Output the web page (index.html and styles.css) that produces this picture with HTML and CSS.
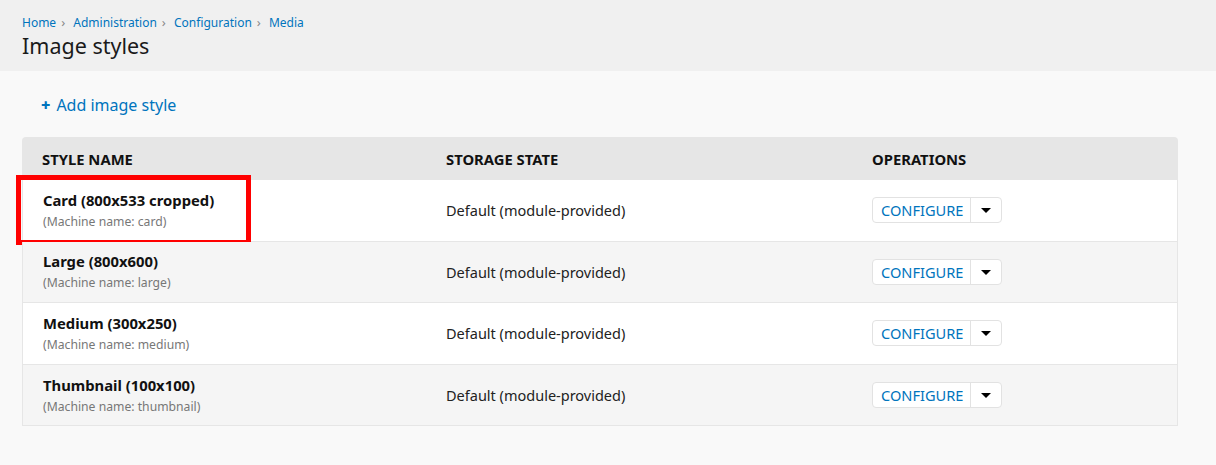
FILE: index.html
```html
<!DOCTYPE html>
<html>
<head>
	<title>Image styles</title>
	<link rel="stylesheet" href="styles.css">
</head>
<body>
	<div class="page-header">
		<nav class="breadcrumb">
			<a href="#">Home</a><span class="sep">&rsaquo;</span>
			<a href="#">Administration</a><span class="sep">&rsaquo;</span>
			<a href="#">Configuration</a><span class="sep">&rsaquo;</span>
			<a href="#">Media</a>
		</nav>
		<h1 class="page-title">Image styles</h1>
	</div>

	<div class="content">
		<a href="#" class="action-link"><span class="plus">+</span>Add image style</a>

		<table class="styles-table">
			<thead>
				<tr>
					<th class="col-name">Style name</th>
					<th class="col-state">Storage state</th>
					<th class="col-ops">Operations</th>
				</tr>
			</thead>
			<tbody>
				<tr>
					<td class="name-cell">
						<span class="highlight"></span>
						<div class="style-label">Card (800x533 cropped)</div>
						<div class="machine-name">(Machine name: card)</div>
					</td>
					<td>Default (module-provided)</td>
					<td>
						<div class="dropbutton"><a href="#" class="drop-main">Configure</a><span class="drop-toggle"></span></div>
					</td>
				</tr>
				<tr>
					<td class="name-cell">
						<div class="style-label">Large (800x600)</div>
						<div class="machine-name">(Machine name: large)</div>
					</td>
					<td>Default (module-provided)</td>
					<td>
						<div class="dropbutton"><a href="#" class="drop-main">Configure</a><span class="drop-toggle"></span></div>
					</td>
				</tr>
				<tr>
					<td class="name-cell">
						<div class="style-label">Medium (300x250)</div>
						<div class="machine-name">(Machine name: medium)</div>
					</td>
					<td>Default (module-provided)</td>
					<td>
						<div class="dropbutton"><a href="#" class="drop-main">Configure</a><span class="drop-toggle"></span></div>
					</td>
				</tr>
				<tr>
					<td class="name-cell">
						<div class="style-label">Thumbnail (100x100)</div>
						<div class="machine-name">(Machine name: thumbnail)</div>
					</td>
					<td>Default (module-provided)</td>
					<td>
						<div class="dropbutton"><a href="#" class="drop-main">Configure</a><span class="drop-toggle"></span></div>
					</td>
				</tr>
			</tbody>
		</table>
	</div>
</body>
</html>
```

FILE: styles.css
```css
body {
	margin: 0;
	background-color: #f9f9f9;
	font-family: "Noto Sans", "Open Sans", sans-serif;
	color: #222;
}

a {
	color: #0074bd;
	text-decoration: none;
}

.page-header {
	background-color: #f0f0f0;
	padding: 13px 22px 0;
	height: 58px;
}

.breadcrumb {
	font-size: 12px;
	line-height: 18px;
}

.breadcrumb .sep {
	color: #888;
	margin: 0 5px;
	font-size: 13px;
}

.page-title {
	margin: 0;
	font-size: 21.5px;
	font-weight: normal;
	line-height: 28px;
	color: #1a1a1a;
}

.content {
	padding: 22px 38px 40px 22px;
}

.action-link {
	display: inline-block;
	margin-left: 19px;
	font-size: 16px;
	line-height: 24px;
}

.action-link .plus {
	font-weight: 900;
	margin-right: 6px;
}

.styles-table {
	width: 100%;
	margin-top: 20px;
	border-collapse: separate;
	border-spacing: 0;
	font-size: 14.5px;
}

.styles-table th {
	background-color: #e6e6e6;
	text-align: left;
	text-transform: uppercase;
	font-weight: bold;
	font-size: 14.8px;
	color: #111;
	height: 43px;
	padding: 0 20px;
	box-sizing: border-box;
}

.styles-table th:first-child {
	border-top-left-radius: 4px;
}

.styles-table th:last-child {
	border-top-right-radius: 4px;
}

.col-name {
	width: 404px;
}

.col-state {
	width: 426px;
}

.styles-table td {
	height: 61.6px;
	padding: 0 20px;
	box-sizing: border-box;
	border-bottom: 1px solid #e6e6e6;
	color: #222;
	font-size: 14.5px;
}

.styles-table td:first-child {
	border-left: 1px solid #e6e6e6;
}

.styles-table td:last-child {
	border-right: 1px solid #e6e6e6;
}

.styles-table tbody tr:nth-child(odd) td {
	background-color: #fff;
}

.styles-table tbody tr:nth-child(even) td {
	background-color: #f5f5f5;
}

.name-cell {
	position: relative;
}

.style-label {
	font-weight: bold;
	font-size: 14.8px;
	color: #111;
	line-height: 20px;
	margin-bottom: 3px;
}

.machine-name {
	font-size: 12.2px;
	color: #777;
	line-height: 18px;
}

.highlight {
	position: absolute;
	left: -7px;
	top: -5px;
	width: 235px;
	height: 70px;
	box-sizing: border-box;
	border: 5px solid #ff0000;
}

.dropbutton {
	display: inline-flex;
	height: 26px;
	border: 1px solid #e2e2e2;
	border-radius: 4px;
	background-color: #fff;
	box-sizing: border-box;
}

.drop-main {
	font-size: 14.6px;
	text-transform: uppercase;
	line-height: 24px;
	padding: 0 7px 0 8px;
	border-right: 1px solid #e2e2e2;
}

.drop-toggle {
	width: 30px;
	position: relative;
}

.drop-toggle::after {
	content: "";
	position: absolute;
	left: 10px;
	top: 10px;
	border-left: 5px solid transparent;
	border-right: 5px solid transparent;
	border-top: 5px solid #000;
}
```
